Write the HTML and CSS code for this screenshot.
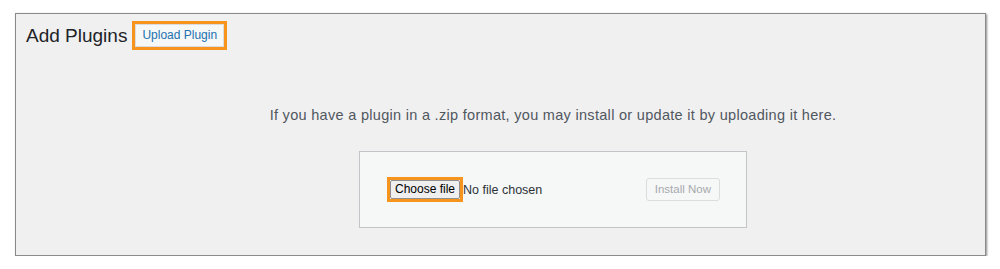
FILE: index.html
```html
<!DOCTYPE html>
<html lang="en">
<head>
<meta charset="utf-8">
<title>Add Plugins</title>
<link rel="stylesheet" href="styles.css">
</head>
<body>
<div class="panel">
  <div class="header">
    <h1 class="title">Add Plugins</h1>
    <span class="highlight highlight-upload"><span class="btn-upload">Upload Plugin</span></span>
  </div>
  <div class="content">
    <p class="install-help">If you have a plugin in a .zip format, you may install or update it by uploading it here.</p>
    <div class="upload-form">
      <span class="highlight highlight-choose"><span class="btn-choose">Choose file</span></span>
      <span class="file-status">No file chosen</span>
      <span class="spacer"></span>
      <span class="btn-install">Install Now</span>
    </div>
  </div>
</div>
</body>
</html>
```

FILE: styles.css
```css
html, body {
  margin: 0;
  padding: 0;
  background: #ffffff;
  font-family: "Liberation Sans", Arial, sans-serif;
}

.panel {
  box-sizing: border-box;
  margin: 13px 0 0 15px;
  width: 971px;
  height: 243px;
  background: #f0f0f1;
  border: 1px solid #8a8a8a;
  box-shadow: 1px 1px 2px rgba(0, 0, 0, 0.45);
}

.header {
  display: flex;
  align-items: center;
  padding: 6px 0 0 10px;
  gap: 5px;
}

.title {
  margin: 0;
  font-size: 19px;
  font-weight: 400;
  color: #1d2327;
  line-height: 29px;
  padding-top: 1px;
}

.highlight {
  display: inline-flex;
  border: 3px solid #f7941d;
}

.btn-upload {
  display: inline-block;
  box-sizing: border-box;
  height: 23px;
  padding: 0 6px;
  background: #f6f7f7;
  border: 1px solid #dcdcde;
  color: #2271b1;
  font-size: 12px;
  line-height: 21px;
}

.content {
  display: flex;
  flex-direction: column;
  align-items: center;
  padding-left: 105px;
}

.install-help {
  margin: 55px 0 0 0;
  font-size: 14.5px;
  letter-spacing: 0.3px;
  line-height: 20px;
  color: #50575e;
}

.upload-form {
  box-sizing: border-box;
  display: flex;
  align-items: center;
  width: 388px;
  height: 77px;
  margin-top: 26px;
  padding: 0 26px 0 27px;
  background: #f6f7f7;
  border: 1px solid #c3c4c7;
}

.btn-choose {
  display: inline-block;
  box-sizing: border-box;
  height: 19px;
  padding: 0 4px;
  background: #efefef;
  border: 1px solid #8f8f8f;
  border-radius: 2px;
  color: #000000;
  font-size: 12px;
  line-height: 17px;
}

.file-status {
  margin-left: 0;
  font-size: 12.5px;
  color: #2c3338;
}

.spacer {
  flex: 1;
}

.btn-install {
  display: inline-block;
  box-sizing: border-box;
  height: 23px;
  padding: 0 8px;
  background: #f6f7f7;
  border: 1px solid #dcdcde;
  border-radius: 3px;
  color: #a7aaad;
  font-size: 11.5px;
  line-height: 21px;
}
```
